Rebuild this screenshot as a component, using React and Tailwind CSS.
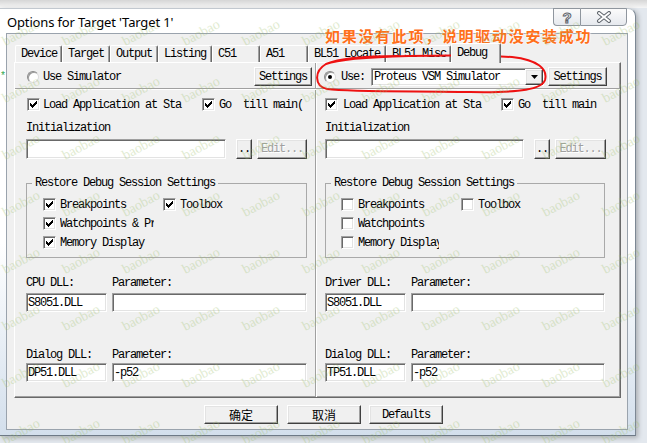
import React from "react";

const M =
  "[font-family:'Liberation_Mono',monospace] text-[12px] tracking-[-1.2px] leading-[12px] text-black whitespace-pre";
const raised =
  "bg-[#f0f0f0] border border-t-white border-l-white border-r-[#404040] border-b-[#404040] shadow-[inset_-1px_-1px_0_#a0a0a0,inset_1px_1px_0_#e3e3e3]";
const sunken =
  "bg-white border border-t-[#a0a0a0] border-l-[#a0a0a0] border-r-white border-b-white shadow-[inset_1px_1px_0_#696969,inset_-1px_-1px_0_#e3e3e3]";

function Check({ on }) {
  return (
    <span className={`w-[13px] h-[13px] shrink-0 flex items-center justify-center ${sunken}`}>
      {on && (
        <svg width="7" height="7" viewBox="0 0 7 7" shapeRendering="crispEdges">
          <path
            fill="#000"
            d="M6 0h1v3h-1zM5 1h1v3h-1zM4 2h1v3h-1zM3 3h1v3h-1zM2 4h1v3h-1zM1 3h1v3h-1zM0 2h1v3h-1z"
          />
        </svg>
      )}
    </span>
  );
}

function Radio({ on }) {
  return (
    <span className="w-[12px] h-[12px] shrink-0 rounded-full bg-white border border-t-[#8a8a8a] border-l-[#8a8a8a] border-r-[#dcdcdc] border-b-[#dcdcdc] shadow-[inset_1px_1px_0_#9a9a9a] flex items-center justify-center">
      {on && <span className="w-[4px] h-[4px] rounded-full bg-black" />}
    </span>
  );
}

function Btn({ className, children }) {
  return (
    <div className={`flex items-center justify-center shrink-0 ${raised} ${className}`}>{children}</div>
  );
}

function Field({ className, children }) {
  return (
    <div className={`flex items-center shrink-0 pl-[1px] overflow-hidden ${sunken} ${className}`}>
      <span className={M}>{children}</span>
    </div>
  );
}

function Tab({ w, label, sel }) {
  return (
    <div
      className={`${w} ${
        sel ? "h-[20px] -mb-[1px] relative z-10 pt-[3px]" : "h-[17px] pt-[2px]"
      } flex items-start shrink-0 bg-[#f0f0f0] border-t border-l border-r border-t-white border-l-white border-r-[#696969] shadow-[inset_-1px_0_0_#a0a0a0] pl-[5px] overflow-hidden rounded-tl-[2px] rounded-tr-[2px]`}
    >
      <span className={M}>{label}</span>
    </div>
  );
}

function Edit() {
  return (
    <span className="[font-family:'Liberation_Mono',monospace] text-[12px] tracking-[-1.2px] leading-[12px] text-[#a0a0a0] [text-shadow:1px_1px_0_#ffffff]">
      Edit...
    </span>
  );
}

function GroupBox({ w, pl, items }) {
  return (
    <fieldset className={`${w} mt-[18px] border border-[#a9a9a9] p-0 m-0`}>
      <legend className={`ml-[5px] px-[3px] ${M}`}>Restore Debug Session Settings</legend>
      <div className={`${pl} pt-[9px] pb-[8px] flex flex-col gap-[6px]`}>
        <div className="flex items-center h-[13px]">
          <div className="w-[120px] flex items-center">
            <Check on={items.on} />
            <span className={`ml-[4px] ${M}`}>Breakpoints</span>
          </div>
          <Check on={items.on} />
          <span className={`ml-[4px] ${M}`}>Toolbox</span>
        </div>
        <div className="flex items-center h-[13px]">
          <Check on={items.on} />
          <span className={`ml-[4px] overflow-hidden ${items.wW} ${M}`}>{items.watch}</span>
        </div>
        <div className="flex items-center h-[13px]">
          <Check on={items.on} />
          <span className={`ml-[4px] overflow-hidden ${items.mW} ${M}`}>Memory Display</span>
        </div>
      </div>
    </fieldset>
  );
}

function Sep() {
  return <div className="w-[2px] shrink-0 border-l border-l-[#a0a0a0] border-r border-r-white" />;
}

const tabs = [
  ["w-[47px]", "Device"],
  ["w-[48px]", "Target"],
  ["w-[48px]", "Output"],
  ["w-[54px]", "Listing"],
  ["w-[48px]", "C51"],
  ["w-[48px]", "A51"],
  ["w-[78px]", "BL51 Locate"],
  ["w-[65px]", "BL51 Misc"],
];

export default function App() {
  const marks = [];
  for (let r = 0; r < 9; r++)
    for (let c = 0; c < 12; c++) marks.push({ left: 1 + c * 60, top: 26 + r * 57 });

  return (
    <div className="relative w-[647px] h-[443px] overflow-hidden bg-[#e3e8ee] [font-family:'Liberation_Sans',sans-serif]">
      <div className="h-[8px] bg-gradient-to-b from-[#d6d6d6] to-[#f6f6f6]" />
      <div className="w-[636px] h-[428px] flex flex-col rounded-tr-[8px] border-t border-r border-b border-t-[#c2c8cf] border-r-[#7d8894] border-b-[#6d7986] bg-gradient-to-b from-white from-55% to-[#d3dfec] shadow-[2px_2px_5px_rgba(0,0,0,0.25)]">
        {/* title bar */}
        <div className="h-[24px] flex items-start">
          <span className="pl-[7px] pt-[6px] text-[13px] leading-[14px] text-black [font-family:'Noto_Sans',sans-serif] tracking-[-0.15px]">
            Options for Target 'Target 1'
          </span>
          <div className="ml-auto mr-[8px] -mt-[1px] flex">
            <div className="w-[27px] h-[18px] border border-[#8f969e] border-r-0 rounded-bl-[4px] bg-gradient-to-b from-[#fbfbfb] to-[#e6e9ee] flex items-center justify-center">
              <span className="text-[15px] leading-none font-bold text-white [font-family:'Liberation_Sans',sans-serif] [-webkit-text-stroke:1px_#5f656c]">
                ?
              </span>
            </div>
            <div className="w-[47px] h-[18px] border border-[#8f969e] rounded-br-[4px] bg-gradient-to-b from-[#fbfbfb] to-[#e6e9ee] flex items-center justify-center">
              <svg width="16" height="12" viewBox="0 0 16 12">
                <path d="M3 2 L13 10 M13 2 L3 10" stroke="#5f656c" strokeWidth="4" strokeLinecap="round" />
                <path d="M3 2 L13 10 M13 2 L3 10" stroke="#ffffff" strokeWidth="2" strokeLinecap="round" />
              </svg>
            </div>
          </div>
        </div>

        {/* client area */}
        <div className="ml-[6px] w-[622px] h-[397px] bg-[#f0f0f0] border border-[#9aa3ad] flex flex-col">
          {/* tabs */}
          <div className="mt-[9px] ml-[8px] h-[19px] flex items-end">
            {tabs.map(([w, l]) => (
              <Tab key={l} w={w} label={l} />
            ))}
            <Tab w="w-[50px]" label="Debug" sel />
          </div>

          {/* panel */}
          <div className="ml-[7px] w-[607px] h-[336px] flex flex-col border border-t-white border-l-white border-r-[#696969] border-b-[#696969] shadow-[inset_-1px_-1px_0_#a0a0a0]">
            {/* top row */}
            <div className="h-[25px] flex">
              <div className="w-[300px] flex items-start pt-[4px] pl-[12px] pr-[3px]">
                <div className="h-[19px] flex items-center">
                  <Radio />
                  <span className={`ml-[4px] ${M}`}>Use Simulator</span>
                </div>
                <Btn className="ml-auto w-[58px] h-[19px]">
                  <span className={M}>Settings</span>
                </Btn>
              </div>
              <Sep />
              <div className="flex-1 flex items-start pt-[4px] pl-[7px]">
                <div className="h-[19px] flex items-center">
                  <Radio on />
                  <span className={`ml-[5px] ${M}`}>Use:</span>
                  <div className={`ml-[6px] w-[173px] h-[18px] flex items-center pl-[2px] ${sunken}`}>
                    <span className={M}>Proteus VSM Simulator</span>
                    <Btn className="ml-auto w-[18px] h-[16px]">
                      <svg width="7" height="4" viewBox="0 0 7 4">
                        <path d="M0 0h7L3.5 4z" fill="#000" />
                      </svg>
                    </Btn>
                  </div>
                </div>
                <Btn className="ml-[4px] w-[59px] h-[19px]">
                  <span className={M}>Settings</span>
                </Btn>
              </div>
            </div>

            <div className="h-[2px] border-t border-t-[#a0a0a0] border-b border-b-white" />

            {/* bottom */}
            <div className="flex-1 flex">
              {/* left */}
              <div className="w-[300px] flex flex-col pl-[11px]">
                <div className="mt-[8px] h-[13px] flex items-center">
                  <div className="ml-[1px] w-[175px] flex items-center">
                    <Check on />
                    <span className={`ml-[3px] ${M}`}>Load Application at Sta</span>
                  </div>
                  <Check on />
                  <span className={`ml-[4px] ${M}`}>{"Go  till main("}</span>
                </div>
                <span className={`mt-[11px] ${M}`}>Initialization</span>
                <div className="mt-[5px] h-[20px] flex">
                  <Field className="w-[200px] h-[20px]"> </Field>
                  <Btn className="ml-[10px] w-[16px] h-[20px]">
                    <span className={M}>..</span>
                  </Btn>
                  <Btn className="ml-[5px] w-[50px] h-[20px]">
                    <Edit />
                  </Btn>
                </div>
                <GroupBox
                  w="w-[281px]"
                  pl="pl-[16px]"
                  items={{ on: true, watch: "Watchpoints & Pr", wW: "w-[94px]", mW: "w-[90px]" }}
                />
                <div className="mt-[19px] flex">
                  <span className={`w-[86px] ${M}`}>CPU DLL:</span>
                  <span className={M}>Parameter:</span>
                </div>
                <div className="mt-[4px] flex">
                  <Field className="w-[81px] h-[19px]">S8051.DLL</Field>
                  <Field className="ml-[5px] w-[195px] h-[19px]"> </Field>
                </div>
                <div className="mt-[37px] flex">
                  <span className={`w-[86px] ${M}`}>Dialog DLL:</span>
                  <span className={M}>Parameter:</span>
                </div>
                <div className="mt-[2px] flex">
                  <Field className="w-[81px] h-[19px]">DP51.DLL</Field>
                  <Field className="ml-[5px] w-[195px] h-[19px]">-p52</Field>
                </div>
              </div>
              <Sep />
              {/* right */}
              <div className="flex-1 flex flex-col pl-[8px]">
                <div className="mt-[8px] h-[13px] flex items-center">
                  <div className="w-[176px] flex items-center">
                    <Check on />
                    <span className={`ml-[5px] ${M}`}>Load Application at Sta</span>
                  </div>
                  <Check on />
                  <span className={`ml-[4px] ${M}`}>{"Go  till main"}</span>
                </div>
                <span className={`mt-[11px] ${M}`}>Initialization</span>
                <div className="mt-[5px] h-[20px] flex">
                  <Field className="w-[199px] h-[20px]"> </Field>
                  <Btn className="ml-[10px] w-[16px] h-[20px]">
                    <span className={M}>..</span>
                  </Btn>
                  <Btn className="ml-[5px] w-[51px] h-[20px]">
                    <Edit />
                  </Btn>
                </div>
                <GroupBox
                  w="w-[280px]"
                  pl="pl-[15px]"
                  items={{ on: false, watch: "Watchpoints", wW: "w-[80px]", mW: "w-[81px]" }}
                />
                <div className="mt-[19px] flex">
                  <span className={`w-[86px] ${M}`}>Driver DLL:</span>
                  <span className={M}>Parameter:</span>
                </div>
                <div className="mt-[4px] flex">
                  <Field className="w-[81px] h-[19px]">S8051.DLL</Field>
                  <Field className="ml-[5px] w-[194px] h-[19px]"> </Field>
                </div>
                <div className="mt-[37px] flex">
                  <span className={`w-[86px] ${M}`}>Dialog DLL:</span>
                  <span className={M}>Parameter:</span>
                </div>
                <div className="mt-[2px] flex">
                  <Field className="w-[81px] h-[19px]">TP51.DLL</Field>
                  <Field className="ml-[5px] w-[194px] h-[19px]">-p52</Field>
                </div>
              </div>
            </div>
          </div>

          {/* buttons */}
          <div className="mt-[7px] pl-[197px] flex">
            <Btn className="w-[74px] h-[19px]">
              <span className="[font-family:'Noto_Sans_CJK_SC',sans-serif] text-[12px] leading-none text-black">确定</span>
            </Btn>
            <Btn className="ml-[9px] w-[74px] h-[19px]">
              <span className="[font-family:'Noto_Sans_CJK_SC',sans-serif] text-[12px] leading-none text-black">取消</span>
            </Btn>
            <Btn className="ml-[8px] w-[74px] h-[19px]">
              <span className={M}>Defaults</span>
            </Btn>
          </div>
        </div>
      </div>

      {/* annotation overlay */}
      <span className="absolute left-[0px] top-[72px] text-[10px] leading-none text-[#2fa84f] [font-family:'Liberation_Mono',monospace]">
        *
      </span>
      <span className="absolute left-[325px] top-[28px] [font-family:'Noto_Sans_CJK_SC',sans-serif] font-bold text-[15px] leading-none tracking-[1.7px] text-[#ff6f1a] [text-shadow:0_0_2px_#fff,0_0_2px_#fff] whitespace-nowrap">
        如果没有此项，说明驱动没安装成功
      </span>
      <svg className="absolute left-0 top-0 pointer-events-none" width="647" height="443" viewBox="0 0 647 443">
        <path
          d="M 326 64 C 350 55, 460 54, 512 57 C 538 60, 548 69, 545 80 C 542 89, 522 93, 470 92 C 410 91, 352 92, 327 89 C 314 86, 314 71, 326 64 C 342 57, 372 56, 398 56"
          fill="none"
          stroke="#ee1111"
          strokeWidth="2"
          strokeLinecap="round"
        />
      </svg>

      {/* watermark */}
      <div className="absolute inset-0 pointer-events-none overflow-hidden">
        {marks.map((m, i) => (
          <span
            key={i}
            className="absolute -rotate-[28deg] [font-family:'Liberation_Serif',serif] text-[14px] leading-none text-[#9cc06a] opacity-30"
            style={{ left: m.left, top: m.top }}
          >
            baobao
          </span>
        ))}
      </div>
    </div>
  );
}
